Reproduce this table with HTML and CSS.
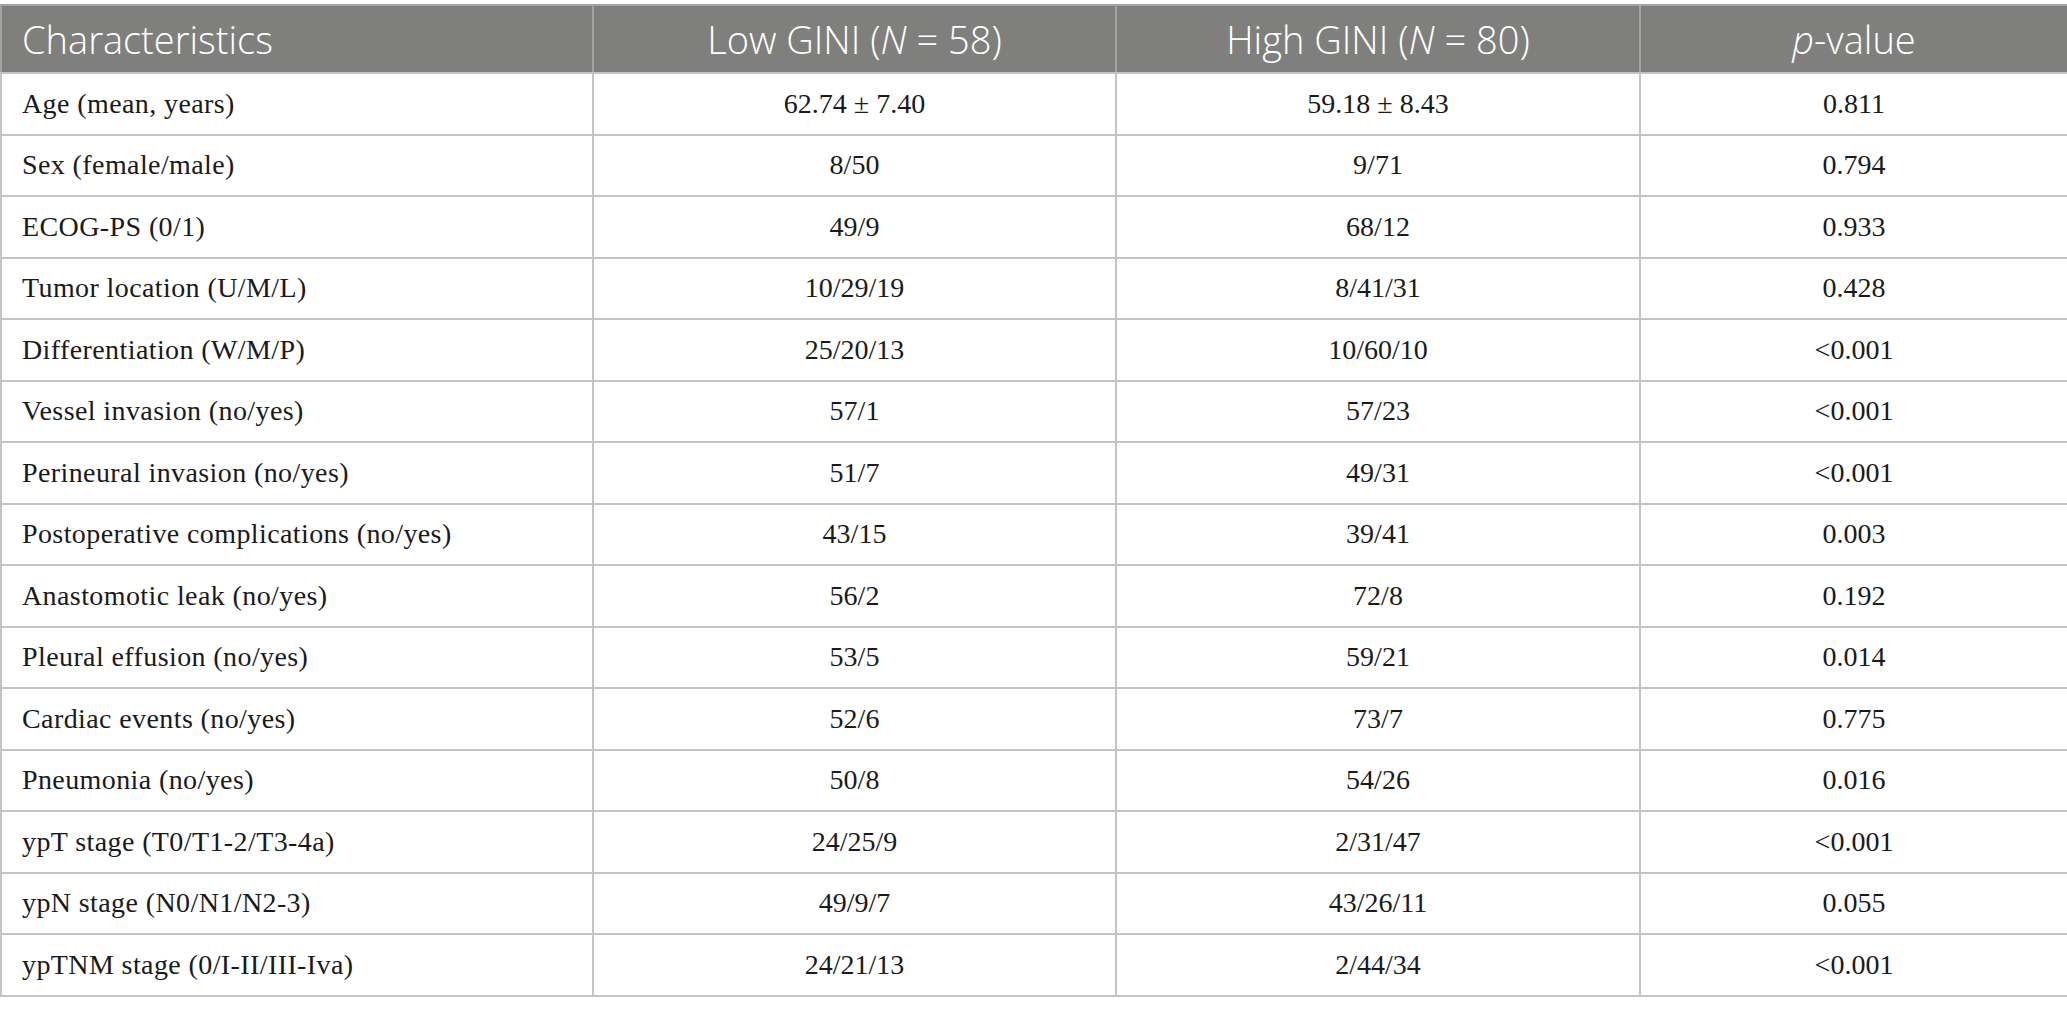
FILE: index.html
```html
<!DOCTYPE html>
<html>
<head>
<meta charset="utf-8">
<link rel="stylesheet" href="styles.css">
</head>
<body>
<table class="data">
  <colgroup>
    <col class="c1"><col class="c2"><col class="c3"><col class="c4">
  </colgroup>
  <thead>
    <tr class="head">
      <th class="left">Characteristics</th>
      <th>Low GINI (<i>N</i> = 58)</th>
      <th>High GINI (<i>N</i> = 80)</th>
      <th><i>p</i>-value</th>
    </tr>
  </thead>
  <tbody>
    <tr><td class="left">Age (mean, years)</td><td>62.74 ± 7.40</td><td>59.18 ± 8.43</td><td>0.811</td></tr>
    <tr><td class="left">Sex (female/male)</td><td>8/50</td><td>9/71</td><td>0.794</td></tr>
    <tr><td class="left">ECOG-PS (0/1)</td><td>49/9</td><td>68/12</td><td>0.933</td></tr>
    <tr><td class="left">Tumor location (U/M/L)</td><td>10/29/19</td><td>8/41/31</td><td>0.428</td></tr>
    <tr><td class="left">Differentiation (W/M/P)</td><td>25/20/13</td><td>10/60/10</td><td>&lt;0.001</td></tr>
    <tr><td class="left">Vessel invasion (no/yes)</td><td>57/1</td><td>57/23</td><td>&lt;0.001</td></tr>
    <tr><td class="left">Perineural invasion (no/yes)</td><td>51/7</td><td>49/31</td><td>&lt;0.001</td></tr>
    <tr><td class="left">Postoperative complications (no/yes)</td><td>43/15</td><td>39/41</td><td>0.003</td></tr>
    <tr><td class="left">Anastomotic leak (no/yes)</td><td>56/2</td><td>72/8</td><td>0.192</td></tr>
    <tr><td class="left">Pleural effusion (no/yes)</td><td>53/5</td><td>59/21</td><td>0.014</td></tr>
    <tr><td class="left">Cardiac events (no/yes)</td><td>52/6</td><td>73/7</td><td>0.775</td></tr>
    <tr><td class="left">Pneumonia (no/yes)</td><td>50/8</td><td>54/26</td><td>0.016</td></tr>
    <tr><td class="left">ypT stage (T0/T1-2/T3-4a)</td><td>24/25/9</td><td>2/31/47</td><td>&lt;0.001</td></tr>
    <tr><td class="left">ypN stage (N0/N1/N2-3)</td><td>49/9/7</td><td>43/26/11</td><td>0.055</td></tr>
    <tr><td class="left">ypTNM stage (0/I-II/III-Iva)</td><td>24/21/13</td><td>2/44/34</td><td>&lt;0.001</td></tr>
  </tbody>
</table>
</body>
</html>
```

FILE: styles.css
```css
html, body {
  margin: 0;
  padding: 0;
  background: #ffffff;
}
body {
  padding-top: 4px;
}
.data {
  width: 2067px;
  border-collapse: collapse;
  table-layout: fixed;
  border: 2px solid #c4c4c4;
}
.c1 { width: 592px; }
.c2 { width: 523px; }
.c3 { width: 524px; }
.c4 { width: 428px; }
.head {
  height: 68px;
  background: #7f807e;
}
.head th {
  font-family: "Open Sans", "Noto Sans", sans-serif;
  font-weight: 300;
  font-size: 38px;
  color: #ffffff;
  text-align: center;
  padding: 0 10px;
  border-left: 2px solid #a3a3a3;
  border-right: 2px solid #a3a3a3;
  border-top: 2px solid #a3a3a3;
  border-bottom: 2px solid #c4c4c4;
  white-space: nowrap;
}
.head th i {
  font-style: italic;
}
tbody tr {
  height: 61.5px;
}
tbody td {
  font-family: "Liberation Serif", "Times New Roman", serif;
  font-size: 28px;
  color: #1a1a1a;
  text-align: center;
  border: 2px solid #c4c4c4;
  padding: 0 10px;
  white-space: nowrap;
}
.data .left {
  text-align: left;
  padding-left: 20px;
}
tbody td.left {
  letter-spacing: 0.4px;
}
```
